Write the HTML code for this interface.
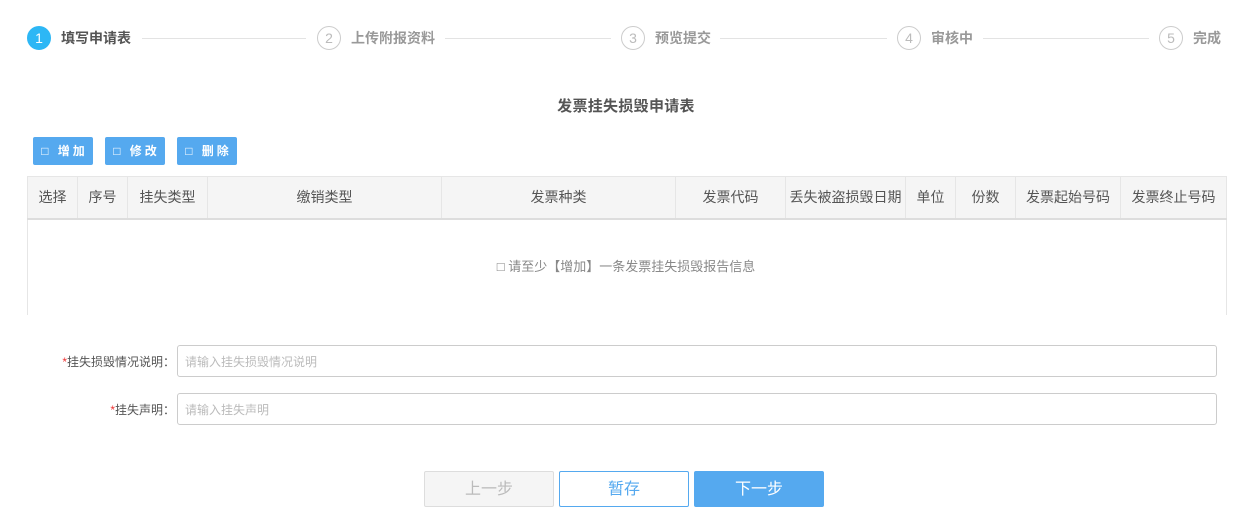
<!DOCTYPE html>
<html><head><meta charset="utf-8"><style>
*{margin:0;padding:0;box-sizing:border-box}
body{width:1252px;height:518px;background:#fff;font-family:"Liberation Sans","Noto Sans CJK SC",sans-serif;position:relative;overflow:hidden;color:#555}
.abs{position:absolute}
.c{position:absolute;top:26px;width:24px;height:24px;border-radius:50%;border:1px solid #ccc;color:#bbb;font-size:14px;line-height:22px;text-align:center}
.c.on{background:#2db7f5;border-color:#2db7f5;color:#fff}
.lab{position:absolute;top:29px;font-size:14px;font-weight:bold;color:#999;line-height:18px}
.line{position:absolute;top:38px;height:1px;background:#e3e3e3}
.btn{position:absolute;top:137px;height:28px;width:60px;background:#55a9ef;color:#fff;font-size:12px;font-weight:bold;line-height:28px;text-align:center;border-radius:2px;letter-spacing:3px;padding-left:3px}
table{position:absolute;left:27px;top:176px;width:1200px;border-collapse:collapse;font-size:14px;color:#555}
th{background:#f5f5f5;height:42px;font-weight:normal;border:1px solid #e6e6e6;border-bottom:2px solid #ddd;text-align:center}
.fl{position:absolute;font-size:12px;color:#555;text-align:right}
.fl b{color:#e33;font-weight:normal}
.inp{position:absolute;left:177px;width:1040px;height:32px;border:1px solid #ccc;border-radius:3px;font-size:12px;color:#bbb;padding:7px 7px}
.bb{position:absolute;top:471px;width:130px;height:36px;font-size:16px;line-height:36px;text-align:center;border-radius:2px}
</style></head><body>
<div class="c on" style="left:27px">1</div><div class="lab" style="left:61px;color:#555">填写申请表</div>
<div class="line" style="left:142px;width:164px"></div>
<div class="c" style="left:317px">2</div><div class="lab" style="left:351px">上传附报资料</div>
<div class="line" style="left:445px;width:166px"></div>
<div class="c" style="left:621px">3</div><div class="lab" style="left:655px">预览提交</div>
<div class="line" style="left:720px;width:167px"></div>
<div class="c" style="left:897px">4</div><div class="lab" style="left:931px">审核中</div>
<div class="line" style="left:983px;width:166px"></div>
<div class="c" style="left:1159px">5</div><div class="lab" style="left:1193px">完成</div>

<div class="abs" style="left:0;width:1252px;top:95px;text-align:center;font-size:15px;font-weight:bold;color:#555;letter-spacing:0.3px">发票挂失损毁申请表</div>

<div class="btn" style="left:33px">□ 增加</div>
<div class="btn" style="left:105px">□ 修改</div>
<div class="btn" style="left:177px">□ 删除</div>

<table><tr>
<th style="width:50px">选择</th><th style="width:50px">序号</th><th style="width:80px">挂失类型</th><th style="width:234px">缴销类型</th><th style="width:234px">发票种类</th><th style="width:110px">发票代码</th><th style="width:120px">丢失被盗损毁日期</th><th style="width:50px">单位</th><th style="width:60px">份数</th><th style="width:105px">发票起始号码</th><th>发票终止号码</th>
</tr></table>
<div class="abs" style="left:27px;top:220px;width:1200px;height:95px;border-left:1px solid #e6e6e6;border-right:1px solid #e6e6e6"></div>
<div class="abs" style="left:0;width:1252px;top:256px;text-align:center;font-size:13px;color:#888">□ 请至少【增加】一条发票挂失损毁报告信息</div>

<div class="fl" style="left:40px;width:135px;top:353px"><b>*</b>挂失损毁情况说明：</div>
<div class="inp" style="top:345px">请输入挂失损毁情况说明</div>
<div class="fl" style="left:40px;width:135px;top:401px"><b>*</b>挂失声明：</div>
<div class="inp" style="top:393px">请输入挂失声明</div>

<div class="bb" style="left:424px;background:#f5f5f5;border:1px solid #ddd;color:#bbb">上一步</div>
<div class="bb" style="left:559px;background:#fff;border:1px solid #55a9ef;color:#55a9ef">暂存</div>
<div class="bb" style="left:694px;background:#55a9ef;border:1px solid #55a9ef;color:#fff">下一步</div>
</body></html>
